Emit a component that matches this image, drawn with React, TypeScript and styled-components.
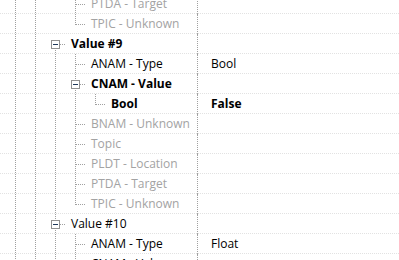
import React from 'react'
import styled, { createGlobalStyle } from 'styled-components'

type Guide = 'none' | 'pass' | 'tee' | 'elbow' | 'down'

interface TreeNode {
  label: string
  value?: string
  guides: Guide[]
  expander?: boolean
  bold?: boolean
  muted?: boolean
  valueBold?: boolean
}

const LINE = '#a0a0a0'

const rows: TreeNode[] = [
  { label: 'PTDA - Target', guides: ['pass', 'pass', 'none', 'tee'], muted: true },
  { label: 'TPIC - Unknown', guides: ['pass', 'pass', 'none', 'elbow'], muted: true },
  { label: 'Value #9', guides: ['pass', 'pass', 'down'], expander: true, bold: true },
  { label: 'ANAM - Type', value: 'Bool', guides: ['pass', 'pass', 'pass', 'tee'] },
  { label: 'CNAM - Value', guides: ['pass', 'pass', 'pass', 'tee'], expander: true, bold: true },
  { label: 'Bool', value: 'False', guides: ['pass', 'pass', 'pass', 'pass', 'elbow'], bold: true, valueBold: true },
  { label: 'BNAM - Unknown', guides: ['pass', 'pass', 'pass', 'tee'], muted: true },
  { label: 'Topic', guides: ['pass', 'pass', 'pass', 'tee'], muted: true },
  { label: 'PLDT - Location', guides: ['pass', 'pass', 'pass', 'tee'], muted: true },
  { label: 'PTDA - Target', guides: ['pass', 'pass', 'pass', 'tee'], muted: true },
  { label: 'TPIC - Unknown', guides: ['pass', 'pass', 'pass', 'elbow'], muted: true },
  { label: 'Value #10', guides: ['pass', 'pass', 'tee'], expander: true },
  { label: 'ANAM - Type', value: 'Float', guides: ['pass', 'pass', 'pass', 'tee'] },
  { label: 'CNAM - Value', guides: ['pass', 'pass', 'pass', 'tee'], expander: true },
]

const GlobalStyle = createGlobalStyle`
  html, body {
    margin: 0;
    padding: 0;
    background: #fff;
    overflow: hidden;
  }
`

const TreeView = styled.div`
  width: 399px;
  height: 260px;
  overflow: hidden;
  font-family: 'Open Sans', 'Noto Sans', sans-serif;
  font-size: 12px;
  color: #000;
`

const Scroller = styled.div`
  margin-top: -6px;
  display: flex;
  flex-direction: column;
`

const Row = styled.div`
  display: grid;
  grid-template-columns: 198px 1fr;
  height: 20px;
  background: linear-gradient(to right, #e2e2e2 50%, transparent 50%) left bottom / 2px 1px repeat-x;
`

const NameCell = styled.div`
  display: flex;
  align-items: center;
  padding-left: 5px;
  border-right: 1px dotted ${LINE};
  overflow: hidden;
  white-space: nowrap;
`

const Label = styled.span<{ $bold?: boolean; $muted?: boolean }>`
  padding-left: 6px;
  line-height: 20px;
  font-weight: ${p => (p.$bold ? 700 : 400)};
  color: ${p => (p.$muted ? '#a3a3a3' : '#000')};
`

const ValueCell = styled.div<{ $bold?: boolean }>`
  padding-left: 13px;
  line-height: 20px;
  white-space: nowrap;
  font-weight: ${p => (p.$bold ? 700 : 400)};
`

const GuideBox = styled.svg`
  flex: none;
  display: block;
  overflow: visible;
`

function GuideCell({ kind, expander }: { kind: Guide; expander?: boolean }) {
  const dash = { stroke: LINE, strokeWidth: 1, strokeDasharray: '1 1', fill: 'none' }
  return (
    <GuideBox width={20} height={20} viewBox="0 0 20 20">
      {kind === 'pass' && <line x1={10.5} y1={0} x2={10.5} y2={20} {...dash} />}
      {kind === 'tee' && <line x1={10.5} y1={0} x2={10.5} y2={20} {...dash} />}
      {kind === 'elbow' && <line x1={10.5} y1={0} x2={10.5} y2={11} {...dash} />}
      {kind === 'down' && <line x1={10.5} y1={10} x2={10.5} y2={20} {...dash} />}
      {(kind === 'tee' || kind === 'elbow' || kind === 'down') && (
        <line x1={11} y1={10.5} x2={21} y2={10.5} {...dash} />
      )}
      {expander && (
        <g>
          <rect x={6.5} y={6.5} width={8} height={8} fill="#fff" stroke="#919191" />
          <line x1={8} y1={10.5} x2={13} y2={10.5} stroke="#1e395b" />
        </g>
      )}
    </GuideBox>
  )
}

export default function App() {
  return (
    <>
      <GlobalStyle />
      <TreeView>
        <Scroller>
          {rows.map((r, i) => (
            <Row key={i}>
              <NameCell>
                {r.guides.map((g, j) => (
                  <GuideCell
                    key={j}
                    kind={g}
                    expander={r.expander && j === r.guides.length - 1}
                  />
                ))}
                <Label $bold={r.bold} $muted={r.muted}>
                  {r.label}
                </Label>
              </NameCell>
              <ValueCell $bold={r.valueBold}>{r.value}</ValueCell>
            </Row>
          ))}
        </Scroller>
      </TreeView>
    </>
  )
}
